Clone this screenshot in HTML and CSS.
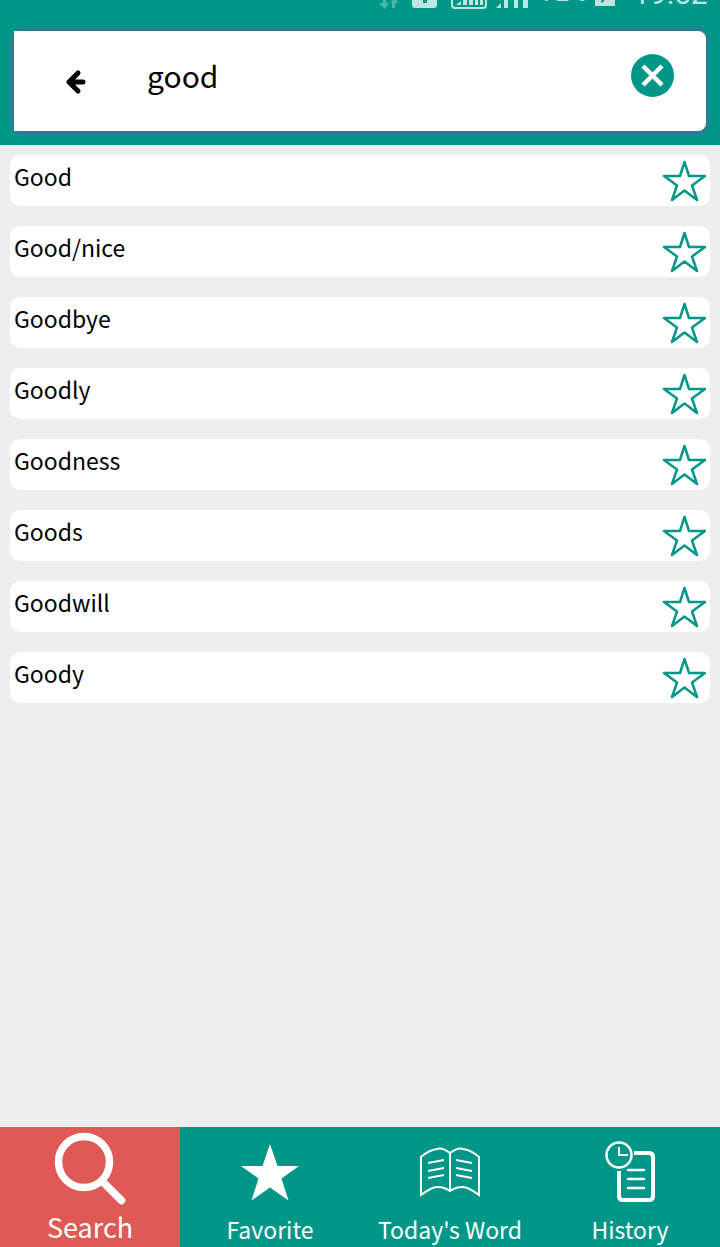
FILE: index.html
```
<!DOCTYPE html>
<html lang="en">

<head>
    <meta charset="UTF-8">
    <meta name="viewport" content="width=device-width, initial-scale=1">
    <title>Dictionary</title>
    <link rel="stylesheet" href="styles.css">
</head>

<body>
    <!-- star outline shared by all the rows -->
    <svg class="defs" aria-hidden="true">
        <symbol id="star" viewBox="0 0 44 44">
            <path d="M22.500 3L27 17H43L30 26.500L35 41L22.500 31.500L10 41L15 26.500L2 17H18Z" fill="none" stroke="currentColor" stroke-width="2.500" stroke-linejoin="round"/>
        </symbol>
    </svg>

    <header class="header">
        <div class="status">
            <svg width="350" height="27" viewBox="370 0 350 27" aria-hidden="true">
                <path d="M379 3H383V0H386V3H389L384.500 9ZM392 8V3H390L393 0H396L398 3H395V8Z" fill="#4db7ac"/>
                <path d="M412 0H437V5Q437 8 434 8H415Q412 8 412 5Z" fill="#bfe5e1"/>
                <path d="M423 0H427V3H423Z" fill="#009788"/>
                <path d="M452 0V5Q452 8 455 8H483Q486 8 486 5V0" fill="none" stroke="#bfe5e1" stroke-width="2"/>
                <path d="M456 5L461 1V5ZM463 0H467V5H463ZM469 0H473V5H469ZM475 0H478V5H475ZM480 0H483V5H480ZM496 8L501 3V8ZM504 0H508V8H504ZM514 0H518V8H514ZM523 0H528V8H523ZM595 0H615V6H595Z" fill="#bfe5e1"/>
                <path d="M601 2L604 0" stroke="#009788" stroke-width="2"/>
                <text x="542" y="1" class="status-text small">72%</text>
                <text x="633" y="4" class="status-text">19:52</text>
            </svg>
        </div>
        <form class="search">
            <div class="search-box">
                <button type="button" class="icon-btn back" aria-label="Back">
                    <svg width="24" height="28" viewBox="0 0 24 28">
                        <path d="M14 5L5 14L14 23M5 14H19" fill="none" stroke="#000" stroke-width="5" stroke-linecap="round" stroke-linejoin="round"/>
                    </svg>
                </button>
                <input type="text" class="search-input" value="good" aria-label="Search word">
                <button type="reset" class="icon-btn clear" aria-label="Clear">
                    <svg width="44" height="44" viewBox="0 0 44 44">
                        <circle cx="22.500" cy="22.500" r="21.500" fill="#009788"/>
                        <path d="M13 13L32 32M32 13L13 32" stroke="#fff" stroke-width="4.500"/>
                    </svg>
                </button>
            </div>
        </form>
    </header>

    <main class="results">
        <ul class="word-list">
            <li class="word"><a href="#">Good</a><button type="button" class="icon-btn fav" aria-label="Add Good to favorites"><svg width="44" height="44"><use href="#star"/></svg></button></li>
            <li class="word"><a href="#">Good/nice</a><button type="button" class="icon-btn fav" aria-label="Add Good/nice to favorites"><svg width="44" height="44"><use href="#star"/></svg></button></li>
            <li class="word"><a href="#">Goodbye</a><button type="button" class="icon-btn fav" aria-label="Add Goodbye to favorites"><svg width="44" height="44"><use href="#star"/></svg></button></li>
            <li class="word"><a href="#">Goodly</a><button type="button" class="icon-btn fav" aria-label="Add Goodly to favorites"><svg width="44" height="44"><use href="#star"/></svg></button></li>
            <li class="word"><a href="#">Goodness</a><button type="button" class="icon-btn fav" aria-label="Add Goodness to favorites"><svg width="44" height="44"><use href="#star"/></svg></button></li>
            <li class="word"><a href="#">Goods</a><button type="button" class="icon-btn fav" aria-label="Add Goods to favorites"><svg width="44" height="44"><use href="#star"/></svg></button></li>
            <li class="word"><a href="#">Goodwill</a><button type="button" class="icon-btn fav" aria-label="Add Goodwill to favorites"><svg width="44" height="44"><use href="#star"/></svg></button></li>
            <li class="word"><a href="#">Goody</a><button type="button" class="icon-btn fav" aria-label="Add Goody to favorites"><svg width="44" height="44"><use href="#star"/></svg></button></li>
        </ul>
    </main>

    <nav class="tabs">
        <a href="#" class="tab active">
            <svg width="84" height="78" viewBox="0 7 84 78">
                <circle cx="36" cy="42" r="25.500" fill="none" stroke="#fff" stroke-width="7.500"/>
                <path d="M54 61L73.500 80.500" stroke="#fff" stroke-width="7.500" stroke-linecap="round"/>
            </svg>
            <span>Search</span>
        </a>
        <a href="#" class="tab">
            <svg width="84" height="78" viewBox="0 7 84 78">
                <path d="M42 24L49.500 46H71L53.500 58.500L60.500 80.500L42 67.500L23.500 80.500L30.500 58.500L13 46H34.500Z" fill="#fff"/>
            </svg>
            <span>Favorite</span>
        </a>
        <a href="#" class="tab">
            <svg width="84" height="78" viewBox="0 7 84 78">
                <path d="M42 33Q34 27 29 29Q21 30 13 37V75Q25 66 30 67Q36 67 42 71Q48 67 54 67Q59 66 71 75V37Q63 30 55 29Q50 27 42 33V71" fill="none" stroke="#fff" stroke-width="2"/>
                <path d="M20 43L36 40M20 51L36 48M20 58L36 55M48 40L64 43M48 48L64 51M48 55L64 58" stroke="#fff" stroke-width="2"/>
            </svg>
            <span>Today's Word</span>
        </a>
        <a href="#" class="tab">
            <svg width="84" height="78" viewBox="0 7 84 78">
                <circle cx="31" cy="35" r="12.500" fill="none" stroke="#fff" stroke-width="2.500"/>
                <path d="M31 27V35H40" fill="none" stroke="#fff" stroke-width="2"/>
                <path d="M46 33H61Q65 33 65 37V76Q65 80 61 80H35Q31 80 31 76V51" fill="none" stroke="#fff" stroke-width="4"/>
                <path d="M40 50H56M40 59H56M40 68H56" stroke="#fff" stroke-width="2.500" stroke-linecap="round"/>
            </svg>
            <span>History</span>
        </a>
    </nav>
</body>

</html>
```
FILE: styles.css
```
* {
    box-sizing: border-box;
}

body {
    margin: 0;
    min-height: 100vh;
    display: flex;
    flex-direction: column;
    background-color: #eeeeee;
    color: #000;
    font-family: "Noto Sans CJK SC", "Noto Sans", sans-serif;
    font-size: 23px;
}

svg {
    display: block;
}

.defs {
    display: none;
}

a {
    color: inherit;
    text-decoration: none;
}

/* top bar */
.header {
    background-color: #009788;
    padding: 0 10px 10px;
}

.status {
    display: flex;
    justify-content: flex-end;
    margin-right: -10px;
}

.status-text {
    font-family: Roboto, sans-serif;
    font-size: 30px;
    fill: #bfe5e1;
}

.status-text.small {
    font-size: 24px;
}

.search {
    background-color: #257f95;
    border-radius: 12px;
    padding: 4px;
}

.search-box {
    display: flex;
    align-items: center;
    height: 100px;
    background-color: #fff;
    border-radius: 0 8px 8px 0;
    padding: 0 32px 12px 50px;
}

.search-input {
    flex: 1;
    min-width: 0;
    border: 0;
    outline: 0;
    padding: 0;
    margin-left: 59px;
    height: 44px;
    background: none;
    font: inherit;
    font-size: 30px;
}

/* buttons that only hold an icon */
.icon-btn {
    border: 0;
    padding: 0;
    background: none;
    cursor: pointer;
}

.back {
    margin-top: 14px;
}

.fav {
    color: #009788;
}

/* list of words */
.results {
    flex: 1;
    padding: 10px;
}

.word-list {
    list-style: none;
    margin: 0;
    padding: 0;
    display: grid;
    gap: 20px;
}

.word {
    display: flex;
    justify-content: space-between;
    align-items: flex-start;
    height: 51px;
    padding: 4px 4px 3px;
    background-color: #fff;
    border-radius: 10px;
}

.word a {
    flex: 1;
    line-height: 34px;
}

/* bottom tabs */
.tabs {
    display: grid;
    grid-template-columns: repeat(4, 1fr);
    background-color: #009788;
    color: #fff;
}

.tab {
    display: flex;
    flex-direction: column;
    align-items: center;
    justify-content: space-between;
    height: 120px;
    line-height: 36px;
}

.tab.active {
    background-color: #e05a55;
    font-size: 27px;
    line-height: 40px;
}
```
